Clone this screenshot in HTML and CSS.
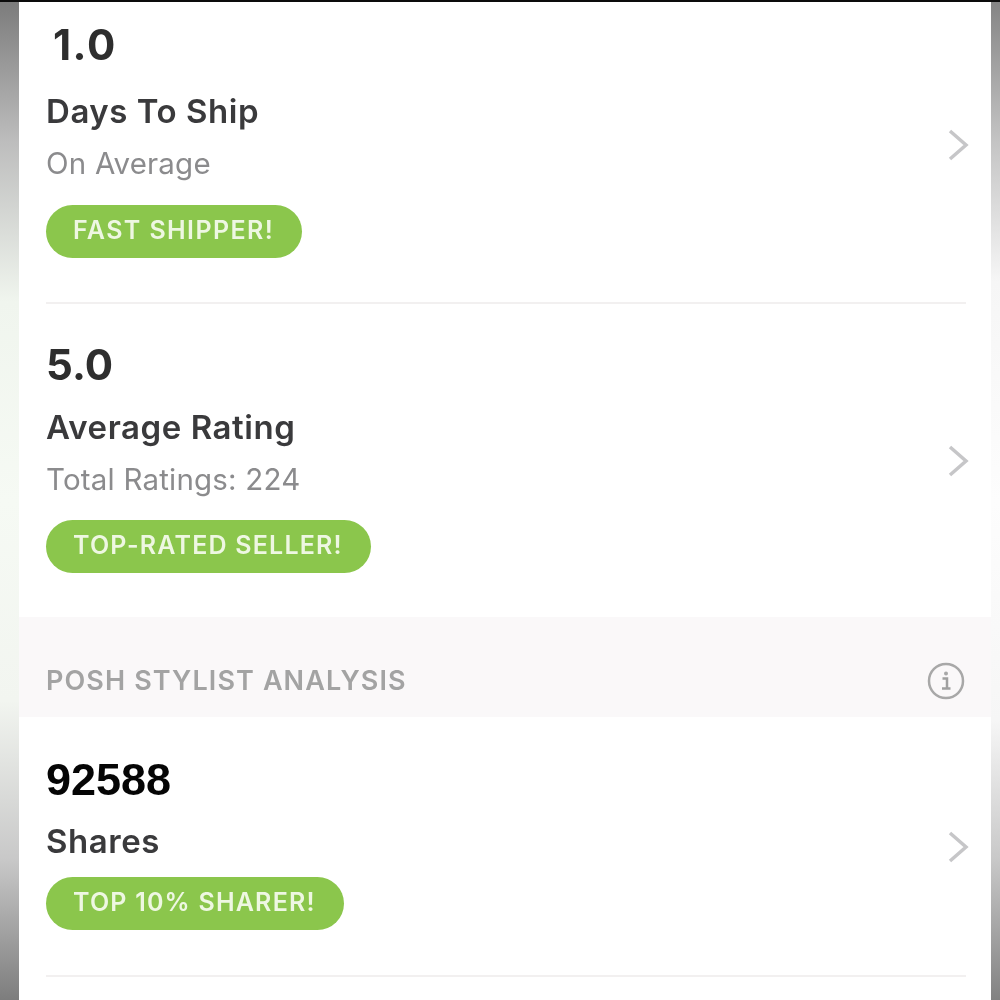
FILE: index.html
```html
<!DOCTYPE html>
<html lang="en">
<head>
<meta charset="utf-8">
<title>Seller stats</title>
<link rel="stylesheet" href="styles.css">
</head>
<body>
<div class="topbar"></div>
<div class="frame">
  <div class="strip strip-left"></div>
  <main class="content">
    <section class="stat stat-first">
      <div class="stat-body">
        <div class="num num-one">1.0</div>
        <div class="title title-first">Days To Ship</div>
        <div class="sub">On Average</div>
        <div class="pill pill-first">FAST SHIPPER!</div>
      </div>
      <svg class="chev" viewBox="0 0 22 34"><path d="M3 3 L19 17 L3 31"/></svg>
    </section>
    <section class="stat stat-second">
      <div class="stat-body">
        <div class="num">5.0</div>
        <div class="title">Average Rating</div>
        <div class="sub">Total Ratings: 224</div>
        <div class="pill pill-second">TOP-RATED SELLER!</div>
      </div>
      <svg class="chev" viewBox="0 0 22 34"><path d="M3 3 L19 17 L3 31"/></svg>
    </section>
    <section class="band">
      <span class="band-title">POSH STYLIST ANALYSIS</span>
      <svg class="info" viewBox="0 0 38 38">
        <circle cx="19" cy="19" r="17"/>
        <circle class="dot" cx="19" cy="11.5" r="2"/>
        <path d="M15.5 16.5 H20 V26 M15 26.5 H23.5"/>
      </svg>
    </section>
    <section class="stat stat-third">
      <div class="stat-body">
        <div class="num num-plain">92588</div>
        <div class="title">Shares</div>
        <div class="pill pill-tight">TOP 10% SHARER!</div>
      </div>
      <svg class="chev" viewBox="0 0 22 34"><path d="M3 3 L19 17 L3 31"/></svg>
    </section>
  </main>
  <div class="strip strip-right"></div>
</div>
</body>
</html>
```
FILE: styles.css
```css
* { box-sizing: border-box; }
html, body { margin: 0; height: 100%; background: #fff; overflow: hidden; }
body { display: flex; flex-direction: column; font-family: "Inter", "Liberation Sans", sans-serif; }
.topbar { height: 2px; background: #0c0c0c; flex: none; }
.frame { display: flex; flex: 1; min-height: 0; }
.strip { flex: none; }
.strip-left { width: 19px; background: linear-gradient(to bottom, #7c7c7c 0%, #bdbdbd 14%, #f0f5ee 30%, #f6faf4 50%, #f2f5f0 70%, #c8c8c8 86%, #7d7d7d 100%); }
.strip-right { width: 9px; background: linear-gradient(to bottom, #858585 0%, #c4c4c4 14%, #f6f6f6 28%, #fdfdfd 50%, #f6f6f6 72%, #c8c8c8 86%, #828282 100%); }
.content { flex: 1; min-width: 0; background: #fff; filter: blur(0.6px); }
.stat { display: flex; align-items: center; justify-content: space-between; margin: 0 25px 0 27px; }
.stat-body { display: flex; flex-direction: column; align-items: flex-start; }
.stat-first { padding: 18px 0 44px; border-bottom: 2px solid #f2f0f0; }
.stat-second { padding: 36px 0 44px; }
.stat-third { padding: 38px 0 45px; border-bottom: 2px solid #f2f0f0; }
.chev { margin-top: 8px; }
.stat-first .chev { margin-top: 12px; }
.num { height: 50px; line-height: 50px; font-size: 42px; font-weight: 700; color: #2e2e2e; }
.num-one { margin-left: 7px; letter-spacing: 1.5px; }
.num-plain { font-family: "Liberation Sans", sans-serif; color: #050505; font-size: 45px; }
.title { height: 40px; line-height: 40px; margin-top: 17px; font-size: 33px; font-weight: 600; letter-spacing: 0.55px; color: #3a3a3c; }
.title-first { margin-top: 21px; }
.stat-third .title { margin-top: 16px; }
.sub { height: 36px; line-height: 36px; margin-top: 14px; font-size: 29.5px; letter-spacing: 0.2px; color: #8b8b8d; }
.pill { display: flex; align-items: center; height: 53px; margin-top: 24px; padding: 0 28px 4px 27px; border-radius: 27px; background: #8bc64c; color: #eef7e2; font-size: 25px; font-weight: 600; letter-spacing: 1.2px; }
.pill-first { min-width: 256px; letter-spacing: 1.4px; }
.pill-second { margin-top: 23px; }
.pill-tight { margin-top: 16px; }
.chev { width: 22px; height: 34px; margin-right: -3px; flex: none; }
.chev path { fill: none; stroke: #c6c6c8; stroke-width: 3.5; }
.band { display: flex; align-items: flex-end; justify-content: space-between; height: 100px; padding: 0 26px 18px 27px; background: #faf8f9; }
.band-title { font-size: 27px; line-height: 36px; font-weight: 600; letter-spacing: 1.1px; color: #a3a3a3; }
.info { width: 38px; height: 38px; margin-bottom: -1px; flex: none; }
.info circle { fill: none; stroke: #a8a8a8; stroke-width: 2.5; }
.info .dot { fill: #a8a8a8; stroke: none; }
.info path { fill: none; stroke: #a0a0a0; stroke-width: 2.5; }
```
